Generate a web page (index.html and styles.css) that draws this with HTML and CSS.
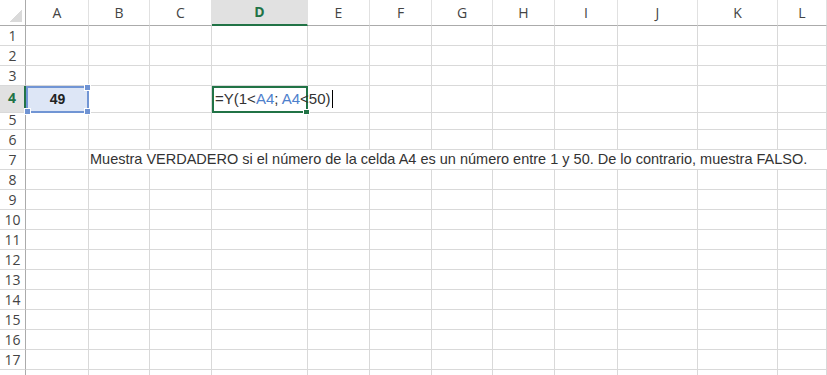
FILE: index.html
```html
<!DOCTYPE html>
<html lang="es">

<head>
    <title>Función Y</title>
    <meta charset="utf-8">
    <link rel="stylesheet" href="styles.css">
</head>

<body>
<div class="sheet">
    <div class="row head">
        <span class="corner"></span><span>A</span><span>B</span><span>C</span><span class="sel">D</span><span>E</span><span>F</span><span>G</span><span>H</span><span>I</span><span>J</span><span>K</span><span>L</span>
    </div>
    <div class="row"><span class="rh">1</span><span></span><span></span><span></span><span></span><span></span><span></span><span></span><span></span><span></span><span></span><span></span><span></span></div>
    <div class="row"><span class="rh">2</span><span></span><span></span><span></span><span></span><span></span><span></span><span></span><span></span><span></span><span></span><span></span><span></span></div>
    <div class="row"><span class="rh">3</span><span></span><span></span><span></span><span></span><span></span><span></span><span></span><span></span><span></span><span></span><span></span><span></span></div>
    <div class="row tall">
        <span class="rh sel">4</span>
        <span class="ref">49<i class="h tr"></i><i class="h br"></i><i class="h bl"></i></span>
        <span></span><span></span>
        <span class="active"><em>=Y(1&lt;<b>A4</b>; <b>A4</b>&lt;50)<u class="caret"></u></em><i class="fill"></i></span>
        <span></span><span></span><span></span><span></span><span></span><span></span><span></span><span></span>
    </div>
    <div class="row"><span class="rh">5</span><span></span><span></span><span></span><span></span><span></span><span></span><span></span><span></span><span></span><span></span><span></span><span></span></div>
    <div class="row"><span class="rh">6</span><span></span><span></span><span></span><span></span><span></span><span></span><span></span><span></span><span></span><span></span><span></span><span></span></div>
    <div class="row"><span class="rh">7</span><span></span><span class="text">Muestra VERDADERO si el número de la celda A4 es un número entre 1 y 50. De lo contrario, muestra FALSO.</span></div>
    <div class="row"><span class="rh">8</span><span></span><span></span><span></span><span></span><span></span><span></span><span></span><span></span><span></span><span></span><span></span><span></span></div>
    <div class="row"><span class="rh">9</span><span></span><span></span><span></span><span></span><span></span><span></span><span></span><span></span><span></span><span></span><span></span><span></span></div>
    <div class="row"><span class="rh">10</span><span></span><span></span><span></span><span></span><span></span><span></span><span></span><span></span><span></span><span></span><span></span><span></span></div>
    <div class="row"><span class="rh">11</span><span></span><span></span><span></span><span></span><span></span><span></span><span></span><span></span><span></span><span></span><span></span><span></span></div>
    <div class="row"><span class="rh">12</span><span></span><span></span><span></span><span></span><span></span><span></span><span></span><span></span><span></span><span></span><span></span><span></span></div>
    <div class="row"><span class="rh">13</span><span></span><span></span><span></span><span></span><span></span><span></span><span></span><span></span><span></span><span></span><span></span><span></span></div>
    <div class="row"><span class="rh">14</span><span></span><span></span><span></span><span></span><span></span><span></span><span></span><span></span><span></span><span></span><span></span><span></span></div>
    <div class="row"><span class="rh">15</span><span></span><span></span><span></span><span></span><span></span><span></span><span></span><span></span><span></span><span></span><span></span><span></span></div>
    <div class="row"><span class="rh">16</span><span></span><span></span><span></span><span></span><span></span><span></span><span></span><span></span><span></span><span></span><span></span><span></span></div>
    <div class="row"><span class="rh">17</span><span></span><span></span><span></span><span></span><span></span><span></span><span></span><span></span><span></span><span></span><span></span><span></span></div>
    <div class="row"><span class="rh"></span><span></span><span></span><span></span><span></span><span></span><span></span><span></span><span></span><span></span><span></span><span></span><span></span></div>
</div>
</body>

</html>
```

FILE: styles.css
```css
html {
    background-color: #ffffff;
}

body {
    margin: 0;
    overflow: hidden;
    font-family: "Liberation Sans", Arial, sans-serif;
    color: #222222;
}

.sheet {
    width: 827px;
}

.row {
    display: grid;
    grid-template-columns: 26px 63px 61px 62px 96px 62px 62px 61px 62px 63px 80px 80px 1fr;
    height: 20px;
}

.row > span {
    box-sizing: border-box;
    border-right: 1px solid #d9d9d9;
    border-bottom: 1px solid #d9d9d9;
    font-size: 14px;
    line-height: 19px;
    white-space: nowrap;
}

.row.tall {
    height: 24px;
}

.row.tall > span {
    line-height: 23px;
}

/* cabeceras */
.head {
    height: 26px;
}

.head > span {
    border-right-color: #e1e1e1;
    border-bottom-color: #ababab;
    text-align: center;
    font-family: "Open Sans", sans-serif;
    font-size: 14px;
    line-height: 25px;
    color: #444444;
}

.head > .corner {
    border-right-color: #ababab;
    background: linear-gradient(135deg, transparent 50%, #dadada 50%) no-repeat right 3px bottom 3px / 12px 12px;
}

.head > .sel {
    background-color: #e1e1e1;
    border-bottom: 2px solid #217346;
    color: #217346;
    font-weight: bold;
    line-height: 24px;
}

.row > .rh {
    border-right-color: #ababab;
    text-align: center;
    font-family: "Open Sans", sans-serif;
    font-size: 14px;
    color: #444444;
}

.row > .rh.sel {
    background-color: #e1e1e1;
    border-right: 2px solid #217346;
    color: #217346;
    font-weight: bold;
}

/* celda A4 */
.row > .ref {
    position: relative;
    border: 2px solid #7195d4;
    background-color: #dde6f6;
    text-align: center;
    font-weight: bold;
    line-height: 20px;
}

.h {
    position: absolute;
    width: 5px;
    height: 5px;
    background-color: #6f93d3;
    border: 1px solid #ffffff;
}

.tr { top: -4px; right: -4px; }
.br { bottom: -4px; right: -4px; }
.bl { bottom: -4px; left: -4px; }

/* celda activa D4 */
.row > .active {
    position: relative;
    z-index: 1;
    border: 2px solid #217346;
    overflow: visible;
}

.active em {
    font-style: normal;
    font-size: 15px;
    line-height: 20px;
    padding-left: 1px;
    color: #333333;
}

.active b {
    font-weight: normal;
    color: #4e80cc;
}

.caret {
    display: inline-block;
    width: 1px;
    height: 18px;
    margin-left: 1px;
    vertical-align: -4px;
    background-color: #000000;
}

.fill {
    position: absolute;
    right: -4px;
    bottom: -4px;
    width: 5px;
    height: 4px;
    background-color: #217346;
    border: 1px solid #ffffff;
}

/* texto de la fila 7 */
.row > .text {
    grid-column: 3 / -1;
    border-right: none;
    padding-left: 1px;
    font-size: 14.5px;
    color: #333333;
}
```
